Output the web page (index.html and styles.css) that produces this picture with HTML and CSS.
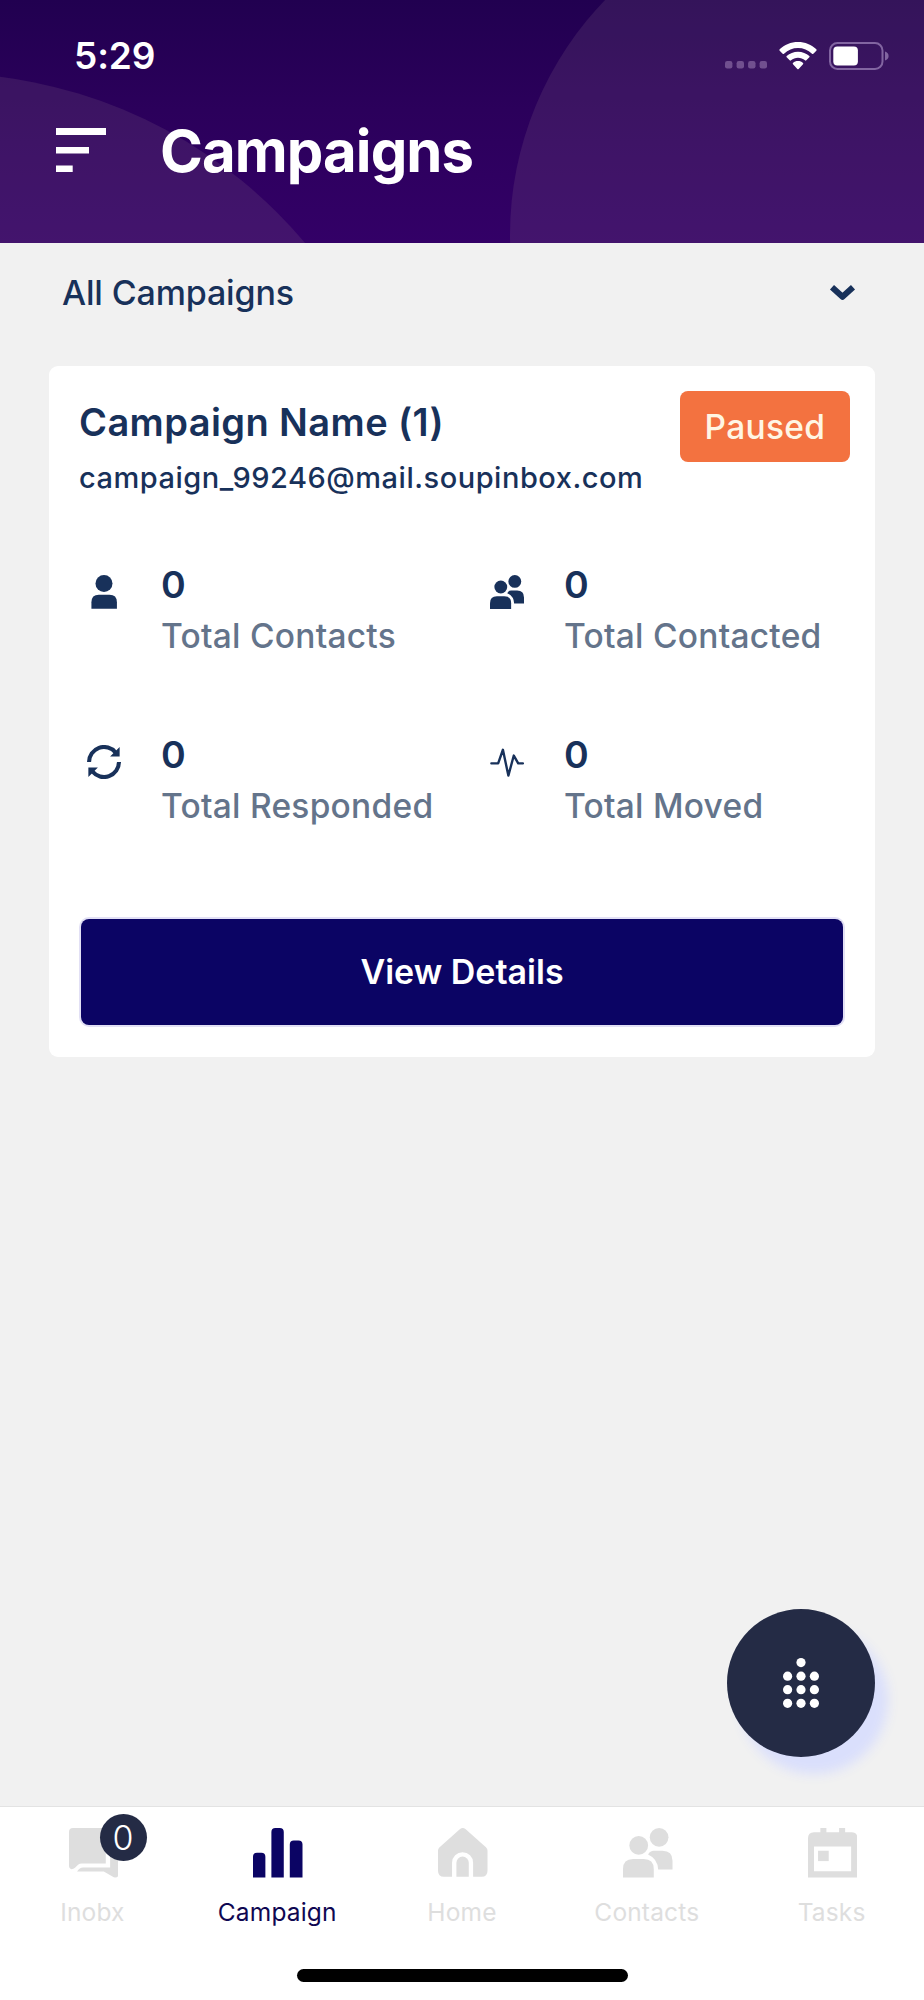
FILE: index.html
```html
<!DOCTYPE html>
<html lang="en">
<head>
<meta charset="utf-8">
<title>Campaigns</title>
<link rel="stylesheet" href="styles.css">
</head>
<body>
<div class="app">
  <header class="header">
    <svg class="header-art" viewBox="0 0 924 243" aria-hidden="true">
      <circle cx="-60" cy="550" r="477"/>
      <circle cx="848" cy="235" r="338"/>
    </svg>
    <div class="status">
      <span class="time">5:29</span>
      <div class="status-icons">
        <svg class="cell" viewBox="0 0 42 8"><rect width="7.4" height="7.4" rx="2.2"/><rect x="11.6" width="7.4" height="7.4" rx="2.2"/><rect x="23.1" width="7.4" height="7.4" rx="2.2"/><rect x="34.6" width="7.4" height="7.4" rx="2.2"/></svg>
        <svg class="wifi" viewBox="0 0 112 84"><path d="M56 0C35 0 15 8 1 22q-2 2 0 4l9 9q2 2 4 0C26 24 40 18 56 18s30 6 42 17q2 2 4 0l9-9q2-2 0-4C97 8 77 0 56 0zM56 29c-13 0-25 5-34 13q-2 2 0 4l9 9q2 2 4 0c6-5 13-8 21-8s15 3 21 8q2 2 4 0l9-9q2-2 0-4C81 34 69 29 56 29zM56 57c-6 0-11 2-15 6q-2 2 0 4l13 14q2 2 4 0l13-14q2-2 0-4c-4-4-9-6-15-6z"/></svg>
        <svg class="battery" viewBox="0 0 60 28"><rect x="1" y="1" width="52.5" height="26" rx="7.5" class="shell"/><rect x="4.3" y="4.4" width="24.6" height="19.2" rx="4" class="charge"/><path class="nub" d="M56 9.5q3.6 1.4 3.6 4.5T56 18.5z"/></svg>
      </div>
    </div>
    <div class="title-row">
      <svg class="menu" viewBox="0 0 50 45"><path d="M0 0h50v7H0zM0 19h33v6.500H0zM0 37.500h16.700v6.500H0z"/></svg>
      <h1>Campaigns</h1>
    </div>
  </header>

  <main class="content">
    <div class="filter">
      <span>All Campaigns</span>
      <svg class="chevron" viewBox="0 0 27 17"><path d="M3 3.200L13.500 12.800 24 3.200"/></svg>
    </div>

    <section class="card">
      <div class="card-head">
        <div>
          <h2>Campaign Name (1)</h2>
          <p class="email">campaign_99246@mail.soupinbox.com</p>
        </div>
        <span class="badge">Paused</span>
      </div>
      <div class="stats">
        <div class="stat">
          <svg class="stat-icon" viewBox="0 0 100 100"><circle cx="50" cy="25" r="25"/><path d="M13 99V80q0-22 22-22h31q22 0 22 22v19z"/></svg>
          <div><div class="value">0</div><div class="label">Total Contacts</div></div>
        </div>
        <div class="stat">
          <svg class="stat-icon" viewBox="0 0 148 148"><circle cx="47" cy="52" r="28"/><circle cx="108" cy="28" r="28"/><path d="M0 148v-25q0-30 30-30h32q30 0 30 30v25z"/><path d="M75 79q6-11 17-11h26q30 0 30 30v26h-43Q104 92 75 79z"/></svg>
          <div><div class="value">0</div><div class="label">Total Contacted</div></div>
        </div>
        <div class="stat">
          <svg class="stat-icon" viewBox="0 0 100 100"><path class="arc" d="M6 50A44 44 0 0 1 84 22M94 50A44 44 0 0 1 16 78"/><path d="M96 6v28H68zM4 94V66h28z"/></svg>
          <div><div class="value">0</div><div class="label">Total Responded</div></div>
        </div>
        <div class="stat">
          <svg class="stat-icon" viewBox="0 0 100 100"><path class="pulse" d="M4 54H24L38 14 54 90 70 31 83 54H97"/></svg>
          <div><div class="value">0</div><div class="label">Total Moved</div></div>
        </div>
      </div>
      <button class="details">View Details</button>
    </section>

    <button class="fab" aria-label="Dial pad">
      <svg viewBox="0 0 36 50"><circle cx="18" cy="4.600" r="4.600"/><circle cx="4.600" cy="18.200" r="4.600"/><circle cx="18" cy="18.200" r="4.600"/><circle cx="31.400" cy="18.200" r="4.600"/><circle cx="4.600" cy="31.700" r="4.600"/><circle cx="18" cy="31.700" r="4.600"/><circle cx="31.400" cy="31.700" r="4.600"/><circle cx="4.600" cy="45.300" r="4.600"/><circle cx="18" cy="45.300" r="4.600"/><circle cx="31.400" cy="45.300" r="4.600"/></svg>
    </button>
  </main>

  <nav class="tabs">
    <div class="tab">
      <div class="tab-icon">
        <svg viewBox="0 0 148 148"><path d="M12 0H98q12 0 12 12V106H38q-6 0-11 4L18 119q-5 4-10 4-8-1-8-10V12Q0 0 12 0z"/><path d="M123 40h12q13 0 13 13V138q0 10-10 10-4 0-8-3L104 130H24Q32 118 42 118H123z"/></svg>
        <span class="count">0</span>
      </div>
      <span>Inobx</span>
    </div>
    <div class="tab active">
      <div class="tab-icon"><svg viewBox="0 0 148 148"><path d="M0 148V86q0-12 12-12h13q12 0 12 12v62zM55 148V12q0-12 12-12h13q12 0 12 12v136zM110 148V49q0-12 12-12h14q12 0 12 12v99z"/></svg></div>
      <span>Campaign</span>
    </div>
    <div class="tab">
      <div class="tab-icon"><svg viewBox="0 0 148 148"><path d="M66 3q8-6 16 0L144 58q4 4 4 9v61q0 18-18 18h-25V104a31.500 31.500 0 0 0-63 0v42H18q-18 0-18-18V67q0-5 4-9z"/><path d="M55 146v-42a18.500 18.500 0 0 1 37 0v42z"/></svg></div>
      <span>Home</span>
    </div>
    <div class="tab">
      <div class="tab-icon"><svg viewBox="0 0 148 148"><circle cx="47" cy="52" r="28"/><circle cx="108" cy="28" r="28"/><path d="M0 148v-25q0-30 30-30h32q30 0 30 30v25z"/><path d="M75 79q6-11 17-11h26q30 0 30 30v26h-43Q104 92 75 79z"/></svg></div>
      <span>Contacts</span>
    </div>
    <div class="tab">
      <div class="tab-icon"><svg viewBox="0 0 148 148"><path fill-rule="evenodd" d="M37 0h18v13h38V0h18v13h19q18 0 18 18v117H0V31Q0 13 18 13h19zM18 55v74h111V55z"/><path d="M30 68h32v31H30z"/></svg></div>
      <span>Tasks</span>
    </div>
    <div class="home-bar"></div>
  </nav>
</div>
</body>
</html>
```

FILE: styles.css
```css
* { box-sizing: border-box; margin: 0; padding: 0; }
body { background: #f1f1f1; font-family: Inter, "Liberation Sans", sans-serif; color: #18315a; }
button { border: 0; font: inherit; }
svg { display: block; flex: none; }

.app { width: 924px; height: 2000px; display: flex; flex-direction: column; overflow: hidden; }

.header { position: relative; height: 243px; flex: none; background: linear-gradient(#210050, #2b005b 45%, #330067); color: #fff; }
.header-art { position: absolute; inset: 0; width: 924px; height: 243px; fill: rgba(150, 120, 140, .17); }
.status { position: relative; height: 111px; display: flex; align-items: center; justify-content: space-between; padding: 0 35px 0 74px; }
.time { font-size: 37px; font-weight: 600; line-height: 44px; letter-spacing: -.1px; }
.status-icons { display: flex; align-items: center; }
.cell { width: 42px; height: 8px; margin: 19px 12px 0 0; fill: #71508f; }
.wifi { width: 38px; height: 28px; margin-right: 12px; fill: #fff; }
.battery { width: 60px; height: 28px; }
.shell { fill: none; stroke: #8265a1; stroke-width: 2; }
.charge { fill: #fff; }
.nub { fill: #8265a1; }
.title-row { position: relative; height: 78px; display: flex; align-items: center; padding-left: 56px; gap: 54px; }
.menu { width: 50px; height: 45px; fill: #fff; }
h1 { font-size: 58px; font-weight: 700; line-height: 70px; letter-spacing: -.9px; padding-top: 1px; }

.content { position: relative; flex: 1; padding: 0 49px; }
.filter { height: 97px; display: flex; align-items: center; justify-content: space-between; padding: 1px 19px 0 13px; font-size: 34px; font-weight: 500; letter-spacing: -.15px; }
.chevron { width: 27px; height: 17px; fill: none; stroke: #18315a; stroke-width: 6; stroke-linejoin: round; }

.card { height: 691px; margin-top: 26px; padding: 25px 32px 32px; border-radius: 9px; background: #fff; display: flex; flex-direction: column; }
.card-head { display: flex; justify-content: space-between; margin: 0 -7px 0 -2px; height: 168px; }
h2 { font-size: 38px; font-weight: 600; line-height: 62px; letter-spacing: .4px; }
.email { font-size: 29px; font-weight: 500; line-height: 50px; letter-spacing: .52px; }
.badge { width: 170px; height: 71px; border-radius: 8px; background: #f37240; color: #fff6e4; font-size: 33.500px; font-weight: 500; letter-spacing: .3px; display: flex; align-items: center; justify-content: center; }
.stats { display: grid; grid-template-columns: 403px 1fr; grid-auto-rows: 170px; flex: 1; }
.stat { display: flex; align-items: flex-start; padding-left: 6px; }
.stat-icon { width: 34px; height: 34px; margin: 16px 40px 0 0; fill: #18315a; }
.arc { fill: none; stroke: #18315a; stroke-width: 12; }
.pulse { fill: none; stroke: #18315a; stroke-width: 7; stroke-linejoin: round; stroke-linecap: round; }
.value { font-size: 37.500px; font-weight: 600; line-height: 52px; }
.label { font-size: 33.500px; font-weight: 500; line-height: 50px; color: #64748b; white-space: nowrap; letter-spacing: .25px; }
.details { height: 106px; padding-bottom: 1px; border-radius: 8px; background: #0b0464; color: #fff; font-size: 34px; font-weight: 600; box-shadow: 0 0 0 2px #e2e0f5; }

.fab { position: absolute; right: 49px; bottom: 49px; width: 148px; height: 148px; border-radius: 50%; background: #242b45; box-shadow: 13px 17px 12px #dadffc; display: flex; align-items: center; justify-content: center; }
.fab svg { width: 36px; height: 50px; fill: #fff; }

.tabs { position: relative; height: 194px; border-top: 1px solid #e3e3e3; background: #fff; display: flex; padding-top: 21px; }
.tab { flex: 1; display: flex; flex-direction: column; align-items: center; font-size: 24.500px; line-height: 30px; letter-spacing: .15px; color: #dedede; gap: 19px; }
.tab-icon { position: relative; margin-left: 2px; }
.tab-icon svg { width: 49.500px; height: 49.500px; fill: #dedede; }
.active { color: #0f0752; }
.active .tab-icon svg { fill: #0b0464; }
.count { position: absolute; left: 31px; top: -14px; width: 47px; height: 47px; border-radius: 50%; background: #242b45; color: #fff; font-size: 34px; font-weight: 300; line-height: 47px; text-align: center; }
.home-bar { position: absolute; left: 297px; bottom: 18px; width: 331px; height: 13px; border-radius: 7px; background: #000; }
```
